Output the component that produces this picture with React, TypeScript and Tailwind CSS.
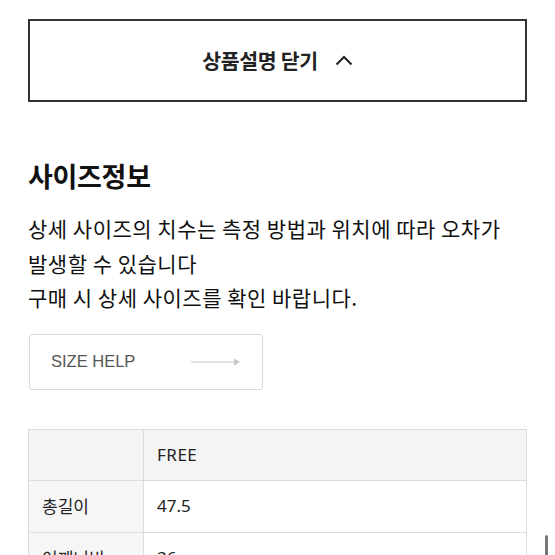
import React from "react";

const rows = [
  { label: "총길이", value: "47.5" },
  { label: "어깨너비", value: "36" },
  { label: "가슴단면", value: "44" },
];

const kr = { fontFamily: '"Noto Sans CJK KR", sans-serif' };

export default function App() {
  return (
    <div
      className="relative w-[555px] h-[555px] overflow-hidden bg-white text-[#111]"
      style={{ fontFamily: '"Noto Sans", "Noto Sans CJK KR", sans-serif' }}
    >
      <div className="px-[28px] pt-[19px]">
        {/* Close description button */}
        <button className="w-full h-[83px] border-2 border-[#333] flex items-center justify-center gap-[17px]">
          <span className="text-[20.5px] font-bold tracking-[-0.3px] text-[#222]" style={kr}>
            상품설명 닫기
          </span>
          <svg width="18" height="11" viewBox="0 0 18 11" fill="none">
            <path d="M1.5 9.5 L9 2 L16.5 9.5" stroke="#222" strokeWidth="2" />
          </svg>
        </button>

        {/* Size info */}
        <h2 className="mt-[56px] text-[27px] leading-[36px] font-bold tracking-[-0.3px] text-[#111]" style={kr}>
          사이즈정보
        </h2>
        <p className="mt-[17px] text-[21px] leading-[34.5px] tracking-[0.5px] text-[#111]" style={kr}>
          상세 사이즈의 치수는 측정 방법과 위치에 따라 오차가
          <br />
          발생할 수 있습니다
          <br />
          구매 시 상세 사이즈를 확인 바랍니다.
        </p>

        <button className="mt-[19px] ml-[1px] w-[234px] h-[56px] rounded-[3px] border border-[#d9d9d9] flex items-center justify-between pl-[21px] pr-[21px]">
          <span
            className="text-[16.5px] text-[#555]"
            style={{ fontFamily: '"Liberation Sans", Arial, sans-serif' }}
          >
            SIZE HELP
          </span>
          <svg width="50" height="10" viewBox="0 0 50 10" fill="none">
            <path d="M0 5 H45" stroke="#c8c8c8" strokeWidth="1.2" />
            <path d="M43 1.5 L49 5 L43 8.5 Z" fill="#c8c8c8" />
          </svg>
        </button>

        {/* Size table */}
        <table className="mt-[39px] w-full border-collapse text-[17px] text-[#222]">
          <tbody>
            <tr className="h-[51px] bg-[#f4f4f4]">
              <td className="w-[115px] border border-[#dcdcdc]" />
              <td className="border border-[#dcdcdc] pl-[13px] tracking-[0.5px]">FREE</td>
            </tr>
            {rows.map((r) => (
              <tr key={r.label} className="h-[52px]">
                <td className="w-[115px] border border-[#dcdcdc] bg-[#f6f6f6] pl-[13px]" style={kr}>
                  {r.label}
                </td>
                <td className="border border-[#dcdcdc] pl-[13px] bg-white">{r.value}</td>
              </tr>
            ))}
          </tbody>
        </table>
      </div>

      {/* scroll indicator */}
      <div className="absolute left-[545px] top-[535px] w-[3px] h-[40px] rounded-full bg-[#777]" />
    </div>
  );
}
